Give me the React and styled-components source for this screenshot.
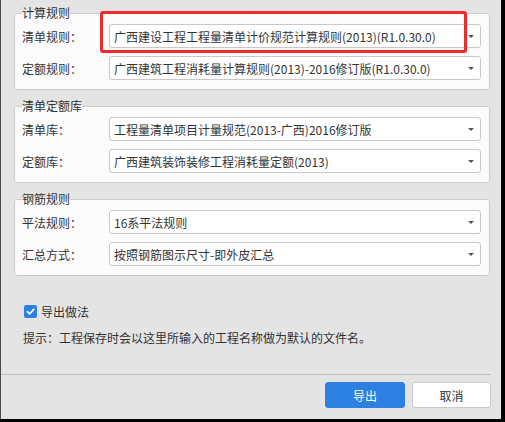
import React from 'react'
import styled, {createGlobalStyle} from 'styled-components'

const GlobalStyle = createGlobalStyle`
  html, body {
    margin: 0;
    padding: 0;
    background: #000;
  }
  body {
    font-family: "Noto Sans CJK SC", "Noto Sans", sans-serif;
    font-size: 12px;
    color: #333;
  }
`

const groups = [
  {
    title: '计算规则',
    rows: [
      {label: '清单规则：', value: '广西建设工程工程量清单计价规范计算规则(2013)(R1.0.30.0)', marked: true},
      {label: '定额规则：', value: '广西建筑工程消耗量计算规则(2013)-2016修订版(R1.0.30.0)'},
    ],
  },
  {
    title: '清单定额库',
    rows: [
      {label: '清单库：', value: '工程量清单项目计量规范(2013-广西)2016修订版'},
      {label: '定额库：', value: '广西建筑装饰装修工程消耗量定额(2013)'},
    ],
  },
  {
    title: '钢筋规则',
    rows: [
      {label: '平法规则：', value: '16系平法规则'},
      {label: '汇总方式：', value: '按照钢筋图示尺寸-即外皮汇总'},
    ],
  },
]

const App = () => {
  return (
    <>
      <GlobalStyle />
      <Dialog>
        <Body>
          {groups.map((g) => (
            <Group key={g.title}>
              <Legend>{g.title}</Legend>
              <Rows>
                {g.rows.map((r) => (
                  <Row key={r.label}>
                    <Label>{r.label}</Label>
                    <Select>
                      <span>{r.value}</span>
                      <Caret />
                      {r.marked && <Mark />}
                    </Select>
                  </Row>
                ))}
              </Rows>
            </Group>
          ))}
          <CheckRow>
            <Check>
              <svg width="9" height="9" viewBox="0 0 10 10">
                <path d="M1.5 5.2 L4 7.6 L8.6 2.6" fill="none" stroke="#fff" strokeWidth="1.8" strokeLinecap="round" strokeLinejoin="round" />
              </svg>
            </Check>
            <span>导出做法</span>
          </CheckRow>
          <Hint>提示：工程保存时会以这里所输入的工程名称做为默认的文件名。</Hint>
        </Body>
        <Footer>
          <Button primary>导出</Button>
          <Button>取消</Button>
        </Footer>
      </Dialog>
    </>
  )
}

const Dialog = styled.div`
  width: 500px;
  height: 419px;
  background: #e4e4e4;
  border-left: 1px solid #4a4a4a;
  display: flex;
  flex-direction: column;
`

const Body = styled.div`
  flex: 1;
  padding: 5px 11px 0 13px;
  display: flex;
  flex-direction: column;
`

const Group = styled.fieldset`
  margin: 0 0 8px 0;
  padding: 0 8px 9px 7px;
  border: 1px solid #cdcdcd;
  border-radius: 3px;
  background: #fbfbfb;
  min-width: 0;
`

const Legend = styled.legend`
  padding: 0;
  font-size: 12px;
  line-height: 16px;
  color: #333;
`

const Rows = styled.div`
  display: flex;
  flex-direction: column;
  gap: 8px;
  padding-top: 3px;
`

const Row = styled.div`
  display: flex;
  align-items: center;
`

const Label = styled.div`
  width: 87px;
  flex: none;
  font-size: 12px;
`

const Select = styled.div`
  position: relative;
  flex: 1;
  height: 24px;
  box-sizing: border-box;
  border: 1px solid #c8c8c8;
  border-radius: 3px;
  background: #fff;
  padding: 0 20px 0 4px;
  display: flex;
  align-items: center;
  font-size: 12px;
  white-space: nowrap;
`

const Caret = styled.i`
  position: absolute;
  right: 6px;
  top: 10px;
  width: 0;
  height: 0;
  border-left: 3px solid transparent;
  border-right: 3px solid transparent;
  border-top: 3px solid #555;
`

const Mark = styled.div`
  position: absolute;
  left: -10px;
  right: 13px;
  top: -14px;
  bottom: -6px;
  border: 3px solid #f02a2a;
  border-radius: 3px;
  pointer-events: none;
`

const CheckRow = styled.div`
  margin-top: 19px;
  margin-left: 10px;
  display: flex;
  align-items: center;
  gap: 4px;
  height: 16px;
  font-size: 12px;
`

const Check = styled.span`
  width: 13px;
  height: 13px;
  border-radius: 2px;
  background: #2d7fe2;
  display: flex;
  align-items: center;
  justify-content: center;
`

const Hint = styled.div`
  margin-top: 11px;
  margin-left: 9px;
  line-height: 16px;
  font-size: 12px;
`

const Footer = styled.div`
  margin-right: 10px;
  border-top: 1px solid #bdbdbd;
  padding: 7px 0 11px;
  display: flex;
  justify-content: flex-end;
  gap: 7px;
`

const Button = styled.button`
  width: ${(p) => (p.primary ? '80px' : '79px')};
  height: 26px;
  border-radius: 3px;
  font-family: inherit;
  font-size: 12px;
  border: 1px solid ${(p) => (p.primary ? '#2d7fe2' : '#cbcbcb')};
  background: ${(p) => (p.primary ? '#2d7fe2' : '#fff')};
  color: ${(p) => (p.primary ? '#fff' : '#333')};
`

export default App
